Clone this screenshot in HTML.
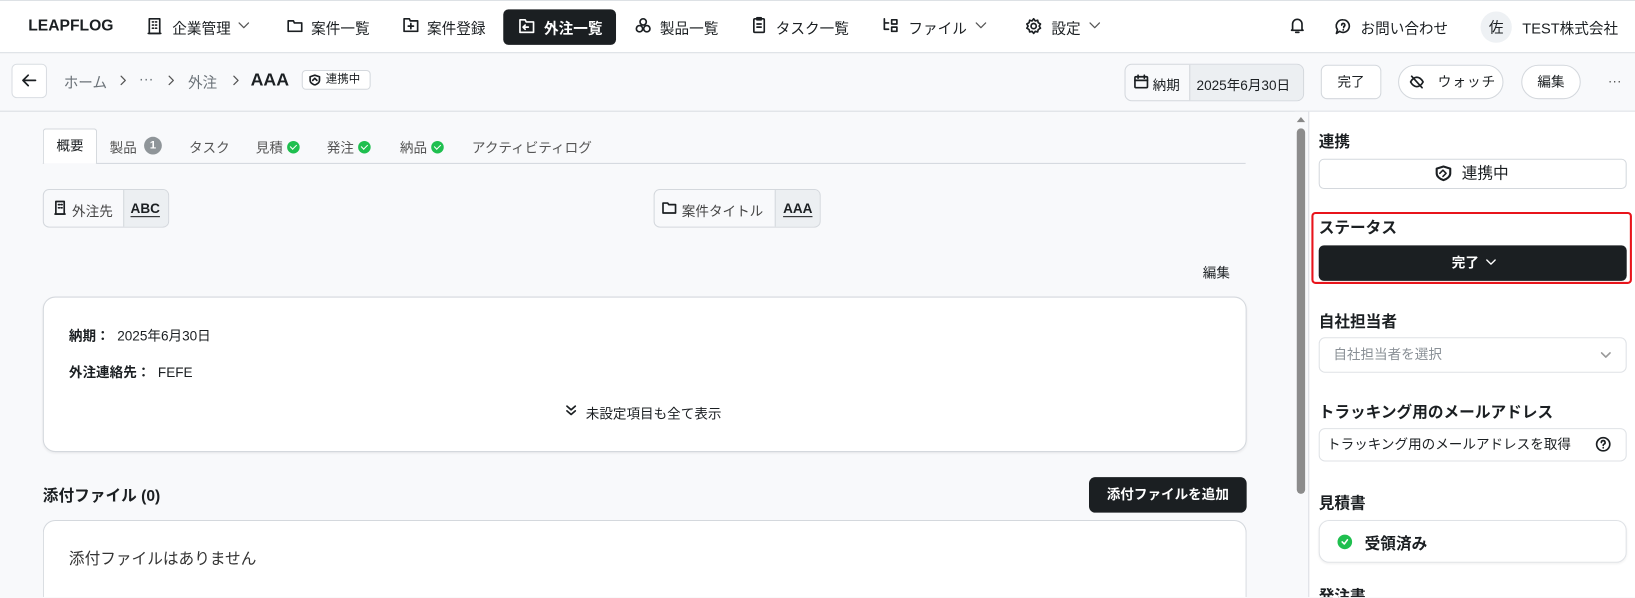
<!DOCTYPE html>
<html><head><meta charset="utf-8"><style>
*{box-sizing:border-box;margin:0;padding:0}
html,body{width:1635px;height:598px;overflow:hidden;background:#f8f9fb}
body{font-family:"Liberation Sans","Noto Sans CJK JP",sans-serif;color:#1b1f22;font-size:13px}
#w{position:absolute;left:0;top:0;width:1566px;height:572px;transform:scale(1.0441);transform-origin:0 0;background:#f8f9fb;overflow:hidden}
.a{position:absolute;white-space:nowrap}
svg{fill:none;stroke:#1b1f22;stroke-width:1.6;stroke-linecap:round;stroke-linejoin:round}
.b{font-weight:700}
.chk{display:inline-block;width:12px;height:12px;border-radius:50%;background:#1fbf4f;vertical-align:-1px;margin-left:4px;position:relative}
.chk:after{content:"";position:absolute;left:4px;top:2px;width:3px;height:5px;border:solid #fff;border-width:0 1.5px 1.5px 0;transform:rotate(45deg)}
.cv{stroke:#555;stroke-width:1.2}
</style></head><body><div id="w">
<div class="a" style="left:0;top:0;width:1566px;height:1px;background:#dde1e5"></div>
<div class="a" style="left:0;top:1px;width:1566px;height:50px;background:#fff;border-bottom:1px solid #d9dde2"></div>
<div class="a b" style="left:27px;top:16px;font-size:15px">LEAPFLOG</div>
<svg class="a" style="left:141px;top:17px" width="14" height="16" viewBox="0 0 14 16"><rect x="2" y="1" width="10" height="14"/><path d="M5 4h1M8 4h1M5 7h1M8 7h1M5 10h1M8 10h1M1 15h12"/></svg>
<div class="a" style="left:165px;top:17px;font-size:14px">企業管理</div>
<svg class="a cv" style="left:228px;top:21px" width="11" height="7" viewBox="0 0 11 7"><path d="M1 1l4.5 4.5L10 1"/></svg>
<svg class="a" style="left:275px;top:18px" width="15" height="13" viewBox="0 0 15 13"><path d="M1 2h5l1 2h7v8H1z"/></svg>
<div class="a" style="left:298px;top:17px;font-size:14px">案件一覧</div>
<svg class="a" style="left:386px;top:17px" width="15" height="14" viewBox="0 0 15 14"><path d="M1 1h5l1 2h7v10H1z M7.5 5.5v5M5 8h5"/></svg>
<div class="a" style="left:409px;top:17px;font-size:14px">案件登録</div>
<div class="a" style="left:482px;top:9px;width:108px;height:34px;background:#1b1f22;border-radius:5px"></div>
<svg class="a" style="left:497px;top:18px;stroke:#fff" width="15" height="14" viewBox="0 0 15 14"><path d="M1 1h5l1 2h7v10H1z M9 8H4M6 6L4 8l2 2"/></svg>
<div class="a b" style="left:521px;top:17px;font-size:14px;color:#fff">外注一覧</div>
<svg class="a" style="left:608px;top:17px" width="16" height="15" viewBox="0 0 16 15"><circle cx="8" cy="4" r="3"/><circle cx="4.5" cy="10.5" r="3"/><circle cx="11.5" cy="10.5" r="3"/></svg>
<div class="a" style="left:632px;top:17px;font-size:14px">製品一覧</div>
<svg class="a" style="left:721px;top:16px" width="12" height="16" viewBox="0 0 12 16"><rect x="1" y="2" width="10" height="13" rx="1"/><rect x="4" y="1" width="4" height="2"/><path d="M4 7h4M4 10h4"/></svg>
<div class="a" style="left:743px;top:17px;font-size:14px">タスク一覧</div>
<svg class="a" style="left:845px;top:17px" width="16" height="15" viewBox="0 0 16 15"><path d="M2 1v10h4M2 5h4M9 2h5v4H9zM9 9h5v4H9z"/></svg>
<div class="a" style="left:870px;top:17px;font-size:14px">ファイル</div>
<svg class="a cv" style="left:934px;top:21px" width="11" height="7" viewBox="0 0 11 7"><path d="M1 1l4.5 4.5L10 1"/></svg>
<svg class="a" style="left:982px;top:17px" width="16" height="16" viewBox="0 0 16 16"><circle cx="8" cy="8" r="2.5"/><path d="M8 1l1.5 2 2.3-.6.6 2.3 2.1 1.3-1.2 2 1.2 2-2.1 1.3-.6 2.3-2.3-.6L8 15l-1.5-2-2.3.6-.6-2.3L1.5 10l1.2-2-1.2-2 2.1-1.3.6-2.3 2.3.6z"/></svg>
<div class="a" style="left:1007px;top:17px;font-size:14px">設定</div>
<svg class="a cv" style="left:1043px;top:21px" width="11" height="7" viewBox="0 0 11 7"><path d="M1 1l4.5 4.5L10 1"/></svg>
<svg class="a" style="left:1236px;top:17px" width="13" height="15" viewBox="0 0 13 15"><path d="M2 11V6a4.5 4.5 0 0 1 9 0v5l1 1H1zM5 14h3"/></svg>
<svg class="a" style="left:1279px;top:18px" width="15" height="15" viewBox="0 0 15 15"><path d="M7.5 1a6 6 0 1 1-3.5 11L1 14l1-3.5A6 6 0 0 1 7.5 1z"/><path d="M6 6a1.5 1.5 0 1 1 2 1.4V8.5M7.5 10.5v.2"/></svg>
<div class="a" style="left:1303px;top:17px;font-size:14px">お問い合わせ</div>
<div class="a" style="left:1418px;top:11px;width:30px;height:30px;border-radius:50%;background:#eef1f4;text-align:center;line-height:30px;font-size:14px">佐</div>
<div class="a" style="left:1458px;top:17px;font-size:14px">TEST株式会社</div>
<div class="a" style="left:0;top:106px;width:1566px;height:1px;background:#d9dde2"></div>
<div class="a" style="left:11px;top:61px;width:34px;height:33px;background:#fff;border:1px solid #d9dde2;border-radius:5px"></div>
<svg class="a" style="left:21px;top:71px" width="14" height="12" viewBox="0 0 14 12"><path d="M13 6H1M6 1L1 6l5 5"/></svg>
<div class="a" style="left:61px;top:69px;font-size:14px;color:#6b7278">ホーム</div>
<svg class="a cv" style="left:115px;top:72px" width="6" height="10" viewBox="0 0 6 10"><path d="M1 1l4 4-4 4"/></svg>
<div class="a" style="left:133px;top:67px;font-size:14px;color:#6b7278">···</div>
<svg class="a cv" style="left:161px;top:72px" width="6" height="10" viewBox="0 0 6 10"><path d="M1 1l4 4-4 4"/></svg>
<div class="a" style="left:180px;top:69px;font-size:14px;color:#6b7278">外注</div>
<svg class="a cv" style="left:223px;top:72px" width="6" height="10" viewBox="0 0 6 10"><path d="M1 1l4 4-4 4"/></svg>
<div class="a b" style="left:240px;top:67px;font-size:17px">AAA</div>
<div class="a" style="left:289px;top:67px;width:66px;height:19px;background:#fff;border:1px solid #d4d8dd;border-radius:4px;font-size:11px;line-height:17px;padding-left:22px">連携中</div>
<svg class="a" style="left:296px;top:71px" width="11" height="11" viewBox="0 0 11 11"><path d="M5.5 1L10 2.5V6c0 2-2 3.5-4.5 4.5C3 9.5 1 8 1 6V2.5z M3.5 6l2-2 2 2"/></svg>
<div class="a" style="left:1077px;top:61px;width:172px;height:36px;border:1px solid #d4d8dd;border-radius:7px;background:#f8f9fb;overflow:hidden"><div style="position:absolute;left:61px;top:0;width:111px;height:36px;background:#eceff2;border-left:1px solid #d4d8dd"></div></div>
<svg class="a" style="left:1086px;top:71px" width="14" height="14" viewBox="0 0 14 14"><rect x="1" y="2.5" width="12" height="10.5" rx="1"/><path d="M1 6h12M4 1v3M10 1v3"/></svg>
<div class="a" style="left:1104px;top:71px;font-size:13px">納期</div>
<div class="a" style="left:1146px;top:71px;font-size:13px">2025年6月30日</div>
<div class="a" style="left:1265px;top:62px;width:58px;height:33px;background:#fff;border:1px solid #d4d8dd;border-radius:6px;text-align:center;line-height:31px;font-size:13px">完了</div>
<div class="a" style="left:1339px;top:62px;width:101px;height:33px;background:#fff;border:1px solid #d4d8dd;border-radius:17px;font-size:13px;line-height:31px;padding-left:37px;letter-spacing:1px">ウォッチ</div>
<svg class="a" style="left:1350px;top:72px" width="14" height="13" viewBox="0 0 14 13"><path d="M1 6.5C3 3 5 2 7 2s4 1 6 4.5C11 10 9 11 7 11S3 10 1 6.5zM2 1l10 11"/></svg>
<div class="a" style="left:1457px;top:62px;width:57px;height:33px;background:#fff;border:1px solid #d4d8dd;border-radius:17px;text-align:center;line-height:31px;font-size:13px">編集</div>
<div class="a" style="left:1540px;top:70px;font-size:13px;color:#555">···</div>
<div class="a" style="left:41px;top:156px;width:1152px;height:1px;background:#d4d8dd"></div>
<div class="a" style="left:41px;top:123px;width:52px;height:34px;background:#fff;border:1px solid #d4d8dd;border-bottom:none;border-radius:3px 3px 0 0;text-align:center;line-height:32px;font-size:13px">概要</div>
<div class="a" style="left:105px;top:131px;font-size:13px;color:#555">製品</div>
<div class="a" style="left:138px;top:131px;width:17px;height:17px;border-radius:50%;background:#8f9599;color:#fff;font-size:11px;text-align:center;line-height:17px;font-weight:700">1</div>
<div class="a" style="left:181px;top:131px;font-size:13px;color:#555">タスク</div>
<div class="a" style="left:245px;top:131px;font-size:13px;color:#555">見積<span class="chk"></span></div>
<div class="a" style="left:313px;top:131px;font-size:13px;color:#555">発注<span class="chk"></span></div>
<div class="a" style="left:383px;top:131px;font-size:13px;color:#555">納品<span class="chk"></span></div>
<div class="a" style="left:452px;top:131px;font-size:13px;color:#555">アクティビティログ</div>
<div class="a" style="left:41px;top:181px;width:121px;height:37px;border:1px solid #d4d8dd;border-radius:6px;overflow:hidden"><div style="position:absolute;left:76px;top:0;width:45px;height:37px;background:#eceff2;border-left:1px solid #d4d8dd"></div></div>
<svg class="a" style="left:52px;top:192px" width="11" height="14" viewBox="0 0 11 14"><rect x="1.5" y="1" width="8" height="12"/><path d="M4 4h1M6.5 4h1M4 7h1M6.5 7h1M0.5 13h10"/></svg>
<div class="a" style="left:69px;top:192px;font-size:13px;color:#444">外注先</div>
<div class="a b" style="left:125px;top:192px;font-size:13px;text-decoration:underline;text-underline-offset:3px">ABC</div>
<div class="a" style="left:626px;top:181px;width:160px;height:37px;border:1px solid #d4d8dd;border-radius:6px;overflow:hidden"><div style="position:absolute;left:115px;top:0;width:45px;height:37px;background:#eceff2;border-left:1px solid #d4d8dd"></div></div>
<svg class="a" style="left:634px;top:193px" width="14" height="12" viewBox="0 0 14 12"><path d="M1 1.5h4.5l1 1.5H13v8H1z"/></svg>
<div class="a" style="left:653px;top:192px;font-size:13px;color:#444">案件タイトル</div>
<div class="a b" style="left:750px;top:192px;font-size:13px;text-decoration:underline;text-underline-offset:3px">AAA</div>
<div class="a" style="left:1152px;top:251px;font-size:13px">編集</div>
<div class="a" style="left:41px;top:284px;width:1153px;height:149px;background:#fff;border:1px solid #d4d8dd;border-radius:12px;box-shadow:0 1px 2px rgba(0,0,0,.06)"></div>
<div class="a" style="left:66px;top:311px;font-size:13px"><b>納期：</b>&nbsp;&nbsp;2025年6月30日</div>
<div class="a" style="left:66px;top:346px;font-size:13px"><b>外注連絡先：</b>&nbsp;&nbsp;FEFE</div>
<svg class="a" style="left:541px;top:387px" width="12" height="12" viewBox="0 0 12 12"><path d="M2 2l4 3.5L10 2M2 6.5l4 3.5 4-3.5"/></svg>
<div class="a" style="left:561px;top:386px;font-size:13px">未設定項目も全て表示</div>
<div class="a b" style="left:41px;top:464px;font-size:15px">添付ファイル (0)</div>
<div class="a b" style="left:1043px;top:457px;width:151px;height:34px;background:#1b1f22;border-radius:6px;color:#fff;text-align:center;line-height:34px;font-size:13px">添付ファイルを追加</div>
<div class="a" style="left:41px;top:498px;width:1153px;height:74px;background:#fff;border:1px solid #d4d8dd;border-bottom:none;border-radius:12px 12px 0 0"></div>
<div class="a" style="left:66px;top:524px;font-size:15px;color:#333">添付ファイルはありません</div>
<div class="a" style="left:1240px;top:107px;width:13px;height:465px;background:#f8f9fb"></div>
<div class="a" style="left:1242px;top:112px;width:0;height:0;border-left:4px solid transparent;border-right:4px solid transparent;border-bottom:5px solid #888"></div>
<div class="a" style="left:1242px;top:123px;width:8px;height:350px;background:#8c8c8c;border-radius:4px"></div>
<div class="a" style="left:1253px;top:107px;width:313px;height:465px;background:#fff;border-left:1px solid #d9dde2"></div>
<div class="a b" style="left:1263px;top:125px;font-size:15px">連携</div>
<div class="a" style="left:1263px;top:152px;width:295px;height:29px;border:1px solid #d4d8dd;border-radius:5px;text-align:center;line-height:27px;font-size:15px;padding-left:24px">連携中</div>
<svg class="a" style="left:1374px;top:158px" width="17" height="16" viewBox="0 0 17 16"><path d="M8.5 1.5L15 3.5V8c0 3-3 5.5-6.5 6.5C5 13.5 2 11 2 8V3.5z" stroke-width="2"/><path d="M5 8l3-3 3 3-3 3" stroke-width="1.5"/></svg>
<div class="a" style="left:1256px;top:203px;width:307px;height:69px;border:2px solid #e8141b;border-radius:4px"></div>
<div class="a b" style="left:1263px;top:207px;font-size:15px">ステータス</div>
<div class="a b" style="left:1263px;top:235px;width:295px;height:34px;background:#1b1f22;border-radius:5px;color:#fff;text-align:center;line-height:34px;font-size:13px;padding-right:14px">完了</div>
<svg class="a" style="left:1423px;top:248px;stroke:#fff;stroke-width:1.3" width="10" height="7" viewBox="0 0 10 7"><path d="M1 1l4 4 4-4"/></svg>
<div class="a b" style="left:1263px;top:297px;font-size:15px">自社担当者</div>
<div class="a" style="left:1263px;top:323px;width:295px;height:34px;border:1px solid #dfe2e6;border-radius:6px;font-size:13px;color:#8a9096;line-height:32px;padding-left:13px">自社担当者を選択</div>
<svg class="a" style="left:1533px;top:337px;stroke:#999" width="10" height="7" viewBox="0 0 10 7"><path d="M1 1l4 4 4-4"/></svg>
<div class="a b" style="left:1263px;top:384px;font-size:15px">トラッキング用のメールアドレス</div>
<div class="a" style="left:1263px;top:410px;width:295px;height:32px;border:1px solid #dfe2e6;border-radius:6px;font-size:13px;line-height:30px;padding-left:7px">トラッキング用のメールアドレスを取得</div>
<svg class="a" style="left:1528px;top:418px" width="15" height="15" viewBox="0 0 15 15"><circle cx="7.5" cy="7.5" r="6.3"/><path d="M5.7 5.8a1.8 1.8 0 1 1 2.4 1.7c-.5.2-.6.6-.6 1.1M7.5 10.8v.1"/></svg>
<div class="a b" style="left:1263px;top:471px;font-size:15px">見積書</div>
<div class="a" style="left:1263px;top:498px;width:295px;height:41px;border:1px solid #dfe2e6;border-radius:10px;box-shadow:0 1px 2px rgba(0,0,0,.06)"></div>
<div class="a" style="left:1281px;top:512px;width:14px;height:14px;border-radius:50%;background:#1fbf4f"></div>
<svg class="a" style="left:1284px;top:515px;stroke:#fff;stroke-width:1.5" width="8" height="8" viewBox="0 0 8 8"><path d="M1.5 4l2 2 3-4"/></svg>
<div class="a b" style="left:1307px;top:510px;font-size:15px">受領済み</div>
<div class="a b" style="left:1263px;top:563px;font-size:15px;height:9px;overflow:hidden;line-height:17px">発注書</div>
</div></body></html>
